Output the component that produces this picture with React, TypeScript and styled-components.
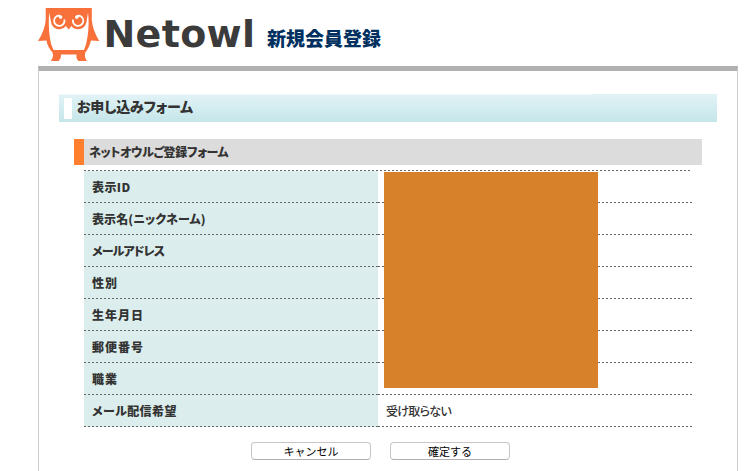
import React from "react";
import styled, { createGlobalStyle } from "styled-components";

const GlobalStyle = createGlobalStyle`
  * { box-sizing: border-box; }
  html, body { margin: 0; background: #fff; }
  body {
    height: 471px;
    overflow: hidden;
    color: #333;
    font-family: "Liberation Sans", "Noto Sans CJK JP", sans-serif;
    font-feature-settings: "palt";
  }
`;

const Page = styled.div`
  width: 700px;
  height: 471px;
  margin-left: 38px;
  display: flex;
  flex-direction: column;
`;

const Header = styled.header`
  height: 66px;
  display: flex;
  flex: none;
`;

const Owl = styled.svg`
  width: 62px;
  height: 54px;
  margin-top: 8px;
  flex: none;
`;

const Wordmark = styled.div`
  width: 160px;
  margin-left: 3.5px;
  padding-top: 14px;
  flex: none;
  font: bold 38px/40px "DejaVu Sans", sans-serif;
  letter-spacing: 0.3px;
  color: #3b3b3b;
`;

const PageTitle = styled.h1`
  margin: 0;
  padding: 24px 0 0 3.5px;
  font: 900 19px/28px "Noto Sans CJK JP", sans-serif;
  font-feature-settings: normal;
  color: #003060;
  white-space: nowrap;
`;

const Panel = styled.main`
  flex: 1;
  border: 1px solid #ccc;
  border-top: 5px solid #b1b1b1;
  border-bottom: 0;
  padding: 23px 20px 0;
`;

const FormHeading = styled.h2`
  width: 658px;
  height: 28px;
  margin: 0;
  padding: 4px 5px;
  display: flex;
  background: linear-gradient(#f0f9fa, #f0f9fa) top left / 533px 1px no-repeat,
    linear-gradient(#e2f3f6, #c5e6ea);
`;

const HeadingMark = styled.span`
  width: 8px;
  height: 21px;
  margin-right: 5px;
  background: #fff;
`;

const Label = styled.span<{ $size?: number; $spacing?: number; $line?: number; $weight?: number }>`
  display: block;
  font-family: "Noto Sans CJK JP", sans-serif;
  font-size: ${(p) => p.$size ?? 12}px;
  font-weight: ${(p) => p.$weight ?? 900};
  line-height: ${(p) => p.$line ?? 31}px;
  letter-spacing: ${(p) => p.$spacing ?? 0}px;
  white-space: nowrap;
`;

const SectionHeading = styled.h3`
  width: 628px;
  height: 26px;
  margin: 17px 0 5px 15px;
  padding-left: 5px;
  border-left: 10px solid #ff7f2f;
  background: #dcdcdc;
  display: flex;
`;

const Table = styled.div`
  position: relative;
  width: 608px;
  margin-left: 25px;
  padding-top: 1px;
  background: repeating-linear-gradient(90deg, #666 0 2px, transparent 2px 4px) top left / 608px 1px no-repeat;
`;

const Row = styled.div`
  height: 32px;
  display: grid;
  grid-template-columns: 294px 314px;
`;

const Cell = styled.div`
  height: 32px;
  padding-left: 8px;
  background: repeating-linear-gradient(90deg, #666 0 2px, transparent 2px 4px) bottom left / 100% 1px no-repeat;
`;

const Name = styled(Cell)`
  background-color: #dbeeed;
`;

const Mask = styled.div`
  position: absolute;
  left: 300px;
  top: 2px;
  width: 214px;
  height: 216px;
  background: #d7822a;
`;

const Actions = styled.div`
  display: flex;
  gap: 19px;
  margin: 15px 0 0 192px;
`;

const Button = styled.button`
  width: 120px;
  height: 18px;
  padding: 0 0 1px;
  border: 1px solid #c6c6c6;
  border-bottom-color: #b0b0b0;
  border-radius: 4px;
  background: #fff;
  color: #000;
  display: flex;
  justify-content: center;
  align-items: center;
`;

const rows = [
  { name: "表示ID", spacing: 0.4 },
  { name: "表示名(ニックネーム)", spacing: 0.1 },
  { name: "メールアドレス", spacing: -0.85 },
  { name: "性別", spacing: 1 },
  { name: "生年月日", spacing: 1 },
  { name: "郵便番号", spacing: 1 },
  { name: "職業", spacing: 1 },
  { name: "メール配信希望", spacing: 0.4, value: "受け取らない" },
];

export default function App() {
  return (
    <>
      <GlobalStyle />
      <Page>
        <Header>
          <Owl viewBox="0 0 62 54">
            <path fill="#f8703a" d="M7.7 0H53.8V12Q54.5 22 61.3 33L53 32.5Q51 40 47.3 44.5Q46 49 49 53H40.5Q38 51 38.5 46.5H23Q23 51 20.5 53H12.7Q16 49 14.5 44.5Q9.5 39 8.5 32.5L0 33Q7 22 7.7 12Z" />
            <path fill="#fff" d="M11.3 4.5L13 14C14 19.5 18 21.5 22 21.2Q26 20.8 28 18L30.7 21.5L33.4 18Q36 21.2 40 21.2C44.5 21.2 47.5 18.5 48.5 14L50 4.5Q51.5 16 49.5 29Q48.5 36.5 46 42H15.5Q12.5 36.5 11.8 29Q10 16 11.3 4.5Z" />
            <g fill="none" stroke="#fff" strokeWidth="1.8">
              <path d="M20.5 7.6A5.2 5.2 0 1 0 26.3 11.4" />
              <path d="M40.9 7.6A5.2 5.2 0 1 1 35.1 11.4" />
            </g>
            <path fill="#fff" d="M20 6.8Q22.2 6.6 24.3 8.2Q24.8 10.7 22.8 11Q20.3 10.8 20 6.8ZM41.4 6.8Q39.2 6.6 37.1 8.2Q36.6 10.7 38.6 11Q41.1 10.8 41.4 6.8Z" />
          </Owl>
          <Wordmark>Netowl</Wordmark>
          <PageTitle>新規会員登録</PageTitle>
        </Header>
        <Panel>
          <FormHeading>
            <HeadingMark />
            <Label $size={14} $line={17} $spacing={-0.2}>お申し込みフォーム</Label>
          </FormHeading>
          <SectionHeading>
            <Label $line={25} $spacing={-0.35}>ネットオウルご登録フォーム</Label>
          </SectionHeading>
          <Table>
            {rows.map((row) => (
              <Row key={row.name}>
                <Name><Label $spacing={row.spacing}>{row.name}</Label></Name>
                <Cell>{row.value && <Label $weight={500} $spacing={-0.7}>{row.value}</Label>}</Cell>
              </Row>
            ))}
            <Mask />
          </Table>
          <Actions>
            <Button><Label $size={11} $line={16} $weight={400}>キャンセル</Label></Button>
            <Button><Label $size={11} $line={16} $weight={400}>確定する</Label></Button>
          </Actions>
        </Panel>
      </Page>
    </>
  );
}
